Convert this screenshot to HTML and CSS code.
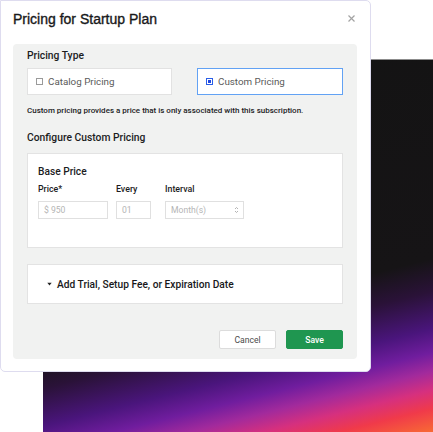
FILE: index.html
```html
<!DOCTYPE html>
<html lang="en">
<head>
<meta charset="utf-8">
<title>Pricing for Startup Plan</title>
<link rel="stylesheet" href="styles.css">
</head>
<body>
<div class="stage">
  <div class="backdrop"></div>
  <div class="dialog">
    <header class="dialog-head">
      <h1 class="dialog-title">Pricing for Startup Plan</h1>
      <button class="close" aria-label="Close">
        <svg width="7" height="7" viewBox="0 0 7 7"><path d="M0.5 0.5L6.5 6.5M6.5 0.5L0.5 6.5" stroke="#a3a3a3" stroke-width="1.2" fill="none"/></svg>
      </button>
    </header>
    <div class="panel">
      <h2 class="section-title">Pricing Type</h2>
      <div class="options">
        <div class="option"><span class="check"></span><span>Catalog Pricing</span></div>
        <div class="option selected"><span class="check"></span><span>Custom Pricing</span></div>
      </div>
      <p class="hint">Custom pricing provides a price that is only associated with this subscription.</p>
      <h2 class="section-title configure">Configure Custom Pricing</h2>
      <div class="card base">
        <h3 class="card-title">Base Price</h3>
        <div class="fields">
          <div class="field f-price">
            <div class="field-label">Price*</div>
            <div class="input">$ 950</div>
          </div>
          <div class="field f-every">
            <div class="field-label">Every</div>
            <div class="input">01</div>
          </div>
          <div class="field f-interval">
            <div class="field-label">Interval</div>
            <div class="input select"><span>Month(s)</span>
              <svg width="5" height="8" viewBox="0 0 5 8"><path d="M1 3L2.5 1.5L4 3M1 5L2.5 6.5L4 5" stroke="#aaaaaa" stroke-width="0.9" fill="none"/></svg>
            </div>
          </div>
        </div>
      </div>
      <div class="card accordion">
        <svg class="caret" width="5" height="4" viewBox="0 0 5 4"><path d="M0.3 0.8H4.7L2.5 3.4Z" fill="#222"/></svg>
        <span>Add Trial, Setup Fee, or Expiration Date</span>
      </div>
      <div class="actions">
        <button class="btn cancel">Cancel</button>
        <button class="btn save">Save</button>
      </div>
    </div>
  </div>
</div>
</body>
</html>
```

FILE: styles.css
```css
* { box-sizing: border-box; }
html, body { margin: 0; padding: 0; background: #ffffff; }
body {
  font-family: Roboto, "Liberation Sans", Arial, sans-serif;
  color: #1c1c1e;
  width: 433px;
  height: 432px;
  overflow: hidden;
}
.stage {
  position: relative;
  width: 433px;
  height: 432px;
}
.backdrop {
  position: absolute;
  left: 43px;
  top: 59px;
  right: 0;
  bottom: 0;
  border-top: 1px solid #8c8c8c;
  background:
    linear-gradient(166deg,
      #131313 0%,
      #161416 63%,
      #2a1238 70%,
      #4a157c 78%,
      #701d9e 83%,
      #a22a9c 87%,
      #d6307e 91%,
      #f03a4a 95%,
      #f86a34 100%);
}
.dialog {
  position: relative;
  z-index: 1;
  width: 371px;
  background: #ffffff;
  border: 1px solid #dedcef;
  border-radius: 0 5px 5px 5px;
  padding: 0 13px 12px 12px;
}
.dialog-head {
  height: 35px;
  display: flex;
  align-items: center;
  justify-content: space-between;
}
.dialog-title {
  margin: 0;
  font-family: "Liberation Sans", Arial, sans-serif;
  font-size: 14px;
  font-weight: 400;
  -webkit-text-stroke: 0.35px #18181a;
  color: #18181a;
}
.close {
  border: 0;
  background: none;
  padding: 0;
  margin-right: 2px;
  width: 7px;
  height: 7px;
  display: flex;
}
.panel {
  margin-top: 8px;
  background: #f1f2f1;
  border-radius: 4px;
  padding: 6px 14px 10px 14px;
}
.section-title {
  margin: 0;
  height: 12px;
  line-height: 12px;
  font-size: 10.3px;
  font-weight: 500;
  color: #1c1c1e;
}
.options {
  margin-top: 6px;
  display: grid;
  grid-template-columns: 145px 146px;
  column-gap: 25px;
}
.option {
  height: 27px;
  background: #ffffff;
  border: 1px solid #e2e2e2;
  display: flex;
  align-items: center;
  padding-left: 8px;
  font-size: 9.8px;
  color: #5a5a5a;
}
.option.selected {
  border: 1.5px solid #62a2f4;
  padding-left: 8px;
}
.check {
  width: 7px;
  height: 7px;
  border: 1px solid #9a9a9a;
  margin-right: 5px;
  flex: none;
}
.option.selected .check {
  border: 1px solid #2a5ee8;
  background: #2048e0;
  box-shadow: inset 0 0 0 1px #ffffff;
}
.hint {
  margin: 11px 0 0 0;
  height: 10px;
  line-height: 10px;
  font-size: 8px;
  font-weight: 500;
  color: #1c1c1e;
}
.configure { margin-top: 16px; }
.card {
  background: #ffffff;
  border: 1px solid #e3e3e3;
}
.base {
  margin-top: 9px;
  height: 95px;
  padding: 12px 10px 0 10px;
}
.card-title {
  margin: 0;
  height: 12px;
  line-height: 12px;
  font-size: 10.2px;
  font-weight: 500;
}
.fields {
  margin-top: 6px;
  display: flex;
}
.f-price { width: 70px; margin-right: 8px; }
.f-every { width: 35px; margin-right: 14px; }
.f-interval { width: 79px; }
.field-label {
  height: 10px;
  line-height: 10px;
  font-size: 8.8px;
  font-weight: 500;
  color: #1c1c1e;
}
.input {
  margin-top: 7px;
  height: 18px;
  border: 1px solid #e0e0e0;
  background: #ffffff;
  font-size: 8.6px;
  color: #b5b5b5;
  display: flex;
  align-items: center;
  padding-left: 5px;
}
.select {
  justify-content: space-between;
  padding-right: 4px;
}
.accordion {
  margin-top: 16px;
  height: 40px;
  display: flex;
  align-items: center;
  padding-left: 19px;
  font-size: 10.2px;
  font-weight: 500;
  color: #18181a;
}
.caret { margin-right: 5px; }
.actions {
  margin-top: 26px;
  display: flex;
  justify-content: flex-end;
  gap: 10px;
}
.btn {
  width: 57px;
  height: 19px;
  border-radius: 2px;
  font-family: Roboto, "Liberation Sans", Arial, sans-serif;
  font-size: 8.6px;
  padding: 0;
  cursor: pointer;
}
.cancel {
  background: #ffffff;
  border: 1px solid #dcdcdc;
  color: #4a4a4a;
}
.save {
  background: #1f9650;
  border: 1px solid #1f9650;
  color: #ffffff;
  font-weight: 500;
}
```
